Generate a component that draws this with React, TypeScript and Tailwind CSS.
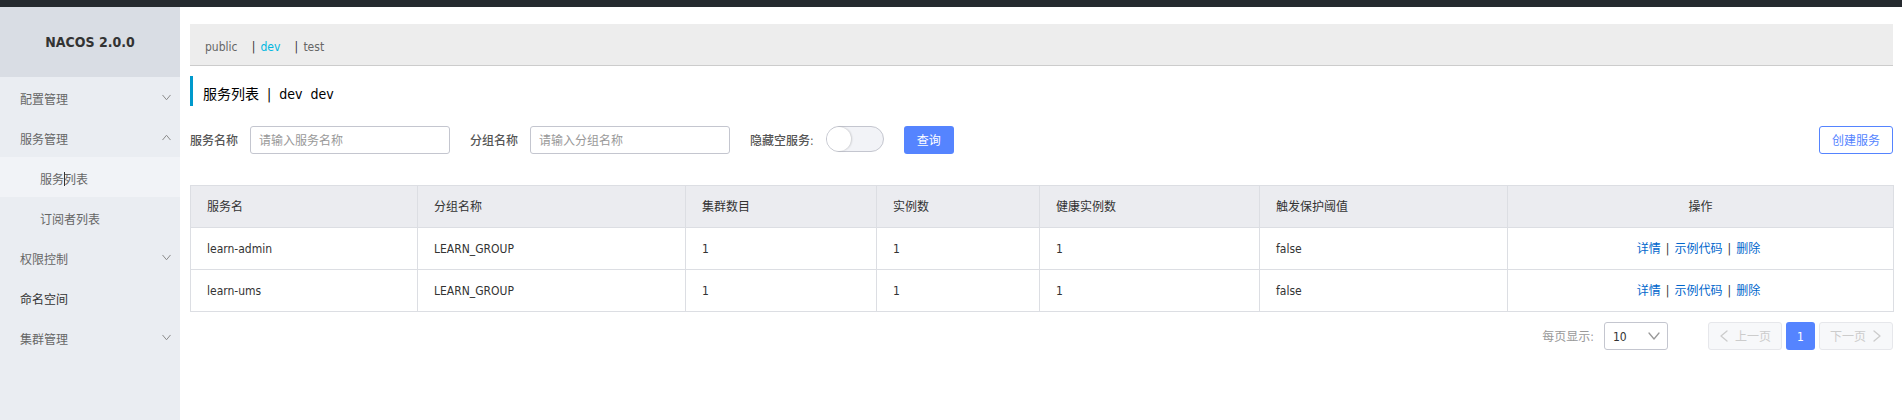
import { useState } from 'react';

type MenuItem = {
  label: string;
  arrow?: 'up' | 'down';
  strong?: boolean;
  children?: { label: string; active?: boolean }[];
};

const menu: MenuItem[] = [
  { label: '配置管理', arrow: 'down' },
  {
    label: '服务管理',
    arrow: 'up',
    children: [{ label: '服务列表', active: true }, { label: '订阅者列表' }],
  },
  { label: '权限控制', arrow: 'down' },
  { label: '命名空间', strong: true },
  { label: '集群管理', arrow: 'down' },
];

const namespaces = ['public', 'dev', 'test'];

const columns = [
  { title: '服务名', width: 'w-[227px]' },
  { title: '分组名称', width: 'w-[268px]' },
  { title: '集群数目', width: 'w-[191px]' },
  { title: '实例数', width: 'w-[163px]' },
  { title: '健康实例数', width: 'w-[220px]' },
  { title: '触发保护阈值', width: 'w-[248px]' },
  { title: '操作', width: 'w-[386px]' },
];

const services = [
  { name: 'learn-admin', group: 'LEARN_GROUP', clusters: 1, instances: 1, healthy: 1, triggered: 'false' },
  { name: 'learn-ums', group: 'LEARN_GROUP', clusters: 1, instances: 1, healthy: 1, triggered: 'false' },
];

const actions = ['详情', '示例代码', '删除'];

function Chevron({ direction, className }: { direction: 'up' | 'down' | 'left' | 'right'; className: string }) {
  const points = {
    up: '1,9 6,3 11,9',
    down: '1,3 6,9 11,3',
    left: '8,1 2,6 8,11',
    right: '4,1 10,6 4,11',
  }[direction];
  return (
    <svg viewBox="0 0 12 12" className={className} fill="none" stroke="currentColor" aria-hidden="true">
      <polyline points={points} strokeWidth="1.3" strokeLinecap="round" strokeLinejoin="round" />
    </svg>
  );
}

function Sidebar() {
  return (
    <aside className="w-[180px] shrink-0 bg-[#eaedf2]">
      <h1 className="flex h-[70px] items-center justify-center bg-[#d9dde4] text-sm font-bold text-[#333]">
        NACOS 2.0.0
      </h1>
      <nav>
        <ul>
          {menu.map((item) => (
            <li key={item.label}>
              <a
                href="#"
                className={`flex h-10 items-center justify-between pr-[9px] pl-5 ${item.strong ? 'text-[#333]' : 'text-[#666]'}`}
              >
                <span className="pt-1.5">{item.label}</span>
                {item.arrow && <Chevron direction={item.arrow} className="size-[9px] text-[#888]" />}
              </a>
              {item.children && (
                <ul>
                  {item.children.map((child) => (
                    <li key={child.label}>
                      <a
                        href="#"
                        className={`flex h-10 items-center pl-10 text-[#666] ${child.active ? 'bg-[#f1f3f7]' : ''}`}
                      >
                        <span className="relative pt-1.5">
                          {child.label}
                          {child.active && (
                            <span className="absolute bottom-0.5 left-6 h-[14px] w-px bg-[#333]" />
                          )}
                        </span>
                      </a>
                    </li>
                  ))}
                </ul>
              )}
            </li>
          ))}
        </ul>
      </nav>
    </aside>
  );
}

export default function App() {
  const [hideEmpty, setHideEmpty] = useState(false);
  const inputClass =
    'h-7 w-[200px] rounded-[3px] border border-[#c4c6cf] bg-white px-2 pt-0.5 text-[#333] outline-none placeholder:text-[#999]';
  const labelClass = 'mr-3 pt-0.5 font-medium text-[#555]';

  return (
    <div className="flex min-h-screen flex-col bg-white font-['DejaVu_Sans_Condensed','Noto_Sans_CJK_SC',sans-serif] text-xs text-[#333]">
      <header className="h-[7px] bg-[#252a2f]" />
      <div className="flex flex-1">
        <Sidebar />
        <main className="min-w-0 flex-1 pt-[17px] pr-[9px] pl-[10px]">
          <nav className="flex h-[42px] items-center border-b border-[#ccc] bg-[#ededed] pt-1 pl-[15px]">
            {namespaces.map((ns, i) => (
              <span key={ns} className="flex">
                {i > 0 && <span className="mr-[5px] w-1 text-center">|</span>}
                <a href="#" className={`mr-[14px] ${ns === 'dev' ? 'text-[#00b7e0]' : 'text-[#666]'}`}>
                  {ns}
                </a>
              </span>
            ))}
          </nav>

          <h2 className="mt-[10px] flex h-[30px] items-center gap-2 border-l-[3px] border-[#09c] pt-1.5 pl-[10px] text-sm text-black">
            <span>服务列表</span>
            <span>|</span>
            <span>dev</span>
            <span>dev</span>
          </h2>

          <form className="mt-5 flex h-7 items-center" onSubmit={(e) => e.preventDefault()}>
            <label htmlFor="service" className={labelClass}>服务名称</label>
            <input id="service" className={inputClass} placeholder="请输入服务名称" />
            <label htmlFor="group" className={`ml-5 ${labelClass}`}>分组名称</label>
            <input id="group" className={inputClass} placeholder="请输入分组名称" />
            <label htmlFor="hide-empty" className={`ml-5 ${labelClass}`}>隐藏空服务:</label>
            <input
              id="hide-empty"
              type="checkbox"
              role="switch"
              checked={hideEmpty}
              onChange={(e) => setHideEmpty(e.target.checked)}
              className="mb-0.5 h-[26px] w-[58px] appearance-none rounded-full border border-[#c4c6cf] bg-[#f2f3f7] before:block before:size-6 before:rounded-full before:bg-white before:shadow-[1px_0_2px_rgba(0,0,0,0.16)] checked:bg-[#5584ff] checked:before:translate-x-8"
            />
            <button type="submit" className="ml-5 h-7 w-[50px] rounded-[3px] bg-[#5584ff] pt-0.5 text-white">查询</button>
            <button type="button" className="ml-auto h-7 w-[74px] rounded-[3px] border border-[#5584ff] bg-white pt-0.5 text-[#5584ff]">
              创建服务
            </button>
          </form>

          <table className="mt-[31px] w-full table-fixed border-collapse border border-[#dcdee3]">
            <thead>
              <tr className="h-[42px] bg-[#ebecf0]">
                {columns.map((c) => (
                  <th
                    key={c.title}
                    className={`${c.width} border border-[#dcdee3] px-4 font-normal ${c.title === '操作' ? 'text-center' : 'text-left'}`}
                  >
                    {c.title}
                  </th>
                ))}
              </tr>
            </thead>
            <tbody>
              {services.map((s) => (
                <tr key={s.name} className="h-[42px]">
                  {[s.name, s.group, s.clusters, s.instances, s.healthy, s.triggered].map((value, i) => (
                    <td key={i} className="border border-[#dcdee3] px-4">{value}</td>
                  ))}
                  <td className="border border-[#dcdee3] pr-5 pl-4">
                    <div className="flex justify-center gap-[5px]">
                      {actions.map((a, i) => (
                        <span key={a} className="flex gap-[5px]">
                          {i > 0 && <span>|</span>}
                          <a href="#" className="text-[#06c]">{a}</a>
                        </span>
                      ))}
                    </div>
                  </td>
                </tr>
              ))}
            </tbody>
          </table>

          <div className="mt-[10px] flex h-7 items-center justify-end">
            <label htmlFor="page-size" className="mr-[10px] pt-0.5 text-[#999]">每页显示:</label>
            <div className="relative mr-10">
              <select
                id="page-size"
                defaultValue="10"
                className="block h-7 w-16 appearance-none rounded-[3px] border border-[#c4c6cf] bg-white pt-0.5 pl-2 text-[#333]"
              >
                <option>10</option>
                <option>20</option>
                <option>50</option>
              </select>
              <Chevron direction="down" className="pointer-events-none absolute top-2 right-2 size-3 text-[#999]" />
            </div>
            <div className="flex gap-1">
              <button
                type="button"
                disabled
                className="flex h-7 w-[74px] items-center justify-center gap-1 rounded-[3px] border border-[#e6e7eb] bg-[#f7f8fa] text-[#ccc]"
              >
                <Chevron direction="left" className="size-3" />
                <span className="pt-0.5">上一页</span>
              </button>
              <button type="button" className="h-7 w-[29px] rounded-[3px] bg-[#5584ff] pt-0.5 text-white">1</button>
              <button
                type="button"
                disabled
                className="flex h-7 w-[74px] items-center justify-center gap-1 rounded-[3px] border border-[#e6e7eb] bg-[#f7f8fa] text-[#ccc]"
              >
                <span className="pt-0.5">下一页</span>
                <Chevron direction="right" className="size-3" />
              </button>
            </div>
          </div>
        </main>
      </div>
    </div>
  );
}
